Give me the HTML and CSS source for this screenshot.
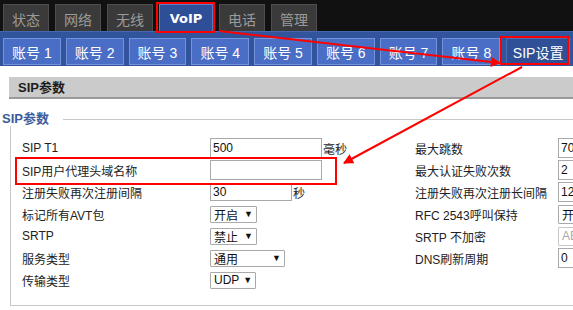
FILE: index.html
```html
<!DOCTYPE html>
<html lang="zh-CN">
<head>
<meta charset="utf-8">
<title>VoIP SIP设置</title>
<link rel="stylesheet" href="styles.css">
</head>
<body>
<div class="page">
  <div class="topbar">
    <div class="ttab">状态</div>
    <div class="ttab">网络</div>
    <div class="ttab">无线</div>
    <div class="ttab active">VoIP</div>
    <div class="ttab">电话</div>
    <div class="ttab">管理</div>
  </div>
  <div class="subnav">
    <div class="stab">账号 1</div>
    <div class="stab">账号 2</div>
    <div class="stab">账号 3</div>
    <div class="stab">账号 4</div>
    <div class="stab">账号 5</div>
    <div class="stab">账号 6</div>
    <div class="stab">账号 7</div>
    <div class="stab">账号 8</div>
    <div class="stab active">SIP设置</div>
  </div>
  <div class="content">
    <div class="sechead">SIP参数</div>
    <div class="fs-head"><span class="legend">SIP参数</span><span class="fs-line"></span></div>
    <div class="fs-body">
      <div class="grid">
        <div class="lbl">SIP T1</div>
        <div class="fld"><span class="inp w112">500</span><span class="unit">毫秒</span></div>
        <div class="lbl">最大跳数</div>
        <div class="fld"><span class="inp wide">70</span></div>

        <div class="lbl">SIP用户代理头域名称</div>
        <div class="fld"><span class="inp w112"></span></div>
        <div class="lbl">最大认证失败次数</div>
        <div class="fld"><span class="inp wide">2</span></div>

        <div class="lbl">注册失败再次注册间隔</div>
        <div class="fld"><span class="inp w82 short">30</span><span class="unit">秒</span></div>
        <div class="lbl">注册失败再次注册长间隔</div>
        <div class="fld"><span class="inp wide">1200</span></div>

        <div class="lbl">标记所有AVT包</div>
        <div class="fld"><span class="sel w47">开启<span class="arr">▼</span></span></div>
        <div class="lbl">RFC 2543呼叫保持</div>
        <div class="fld"><span class="sel wide">开启<span class="arr">▼</span></span></div>

        <div class="lbl">SRTP</div>
        <div class="fld"><span class="sel w47">禁止<span class="arr">▼</span></span></div>
        <div class="lbl">SRTP 不加密</div>
        <div class="fld"><span class="sel wide disabled">AES_CM_128_HMAC_SHA1_80<span class="arr">▼</span></span></div>

        <div class="lbl">服务类型</div>
        <div class="fld"><span class="sel w75">通用<span class="arr">▼</span></span></div>
        <div class="lbl">DNS刷新周期</div>
        <div class="fld"><span class="inp wide">0</span></div>

        <div class="lbl">传输类型</div>
        <div class="fld"><span class="sel w46">UDP<span class="arr">▼</span></span></div>
        <div class="lbl"></div>
        <div class="fld"></div>
      </div>
    </div>
  </div>
  <svg class="annot" width="573" height="310" viewBox="0 0 573 310" xmlns="http://www.w3.org/2000/svg">
    <defs>
      <marker id="ah" viewBox="0 0 10 10" refX="9" refY="5" markerWidth="6" markerHeight="5" orient="auto" markerUnits="strokeWidth">
        <path d="M0,0 L10,5 L0,10 z" fill="#f00"/>
      </marker>
    </defs>
    <rect x="157" y="3" width="57" height="29" fill="none" stroke="#f00" stroke-width="2"/>
    <rect x="501" y="37" width="67" height="27" fill="none" stroke="#f00" stroke-width="2"/>
    <rect x="16" y="158" width="320" height="26" fill="none" stroke="#f00" stroke-width="2"/>
    <line x1="219" y1="31" x2="500" y2="63" stroke="#f00" stroke-width="2" marker-end="url(#ah)"/>
    <line x1="522" y1="67" x2="344" y2="163" stroke="#f00" stroke-width="2" marker-end="url(#ah)"/>
  </svg>
</div>
</body>
</html>
```
FILE: styles.css
```css
html, body {
  margin: 0;
  padding: 0;
  background: #fff;
  overflow: hidden;
}
body {
  font-family: "Liberation Sans", "Noto Sans CJK SC", sans-serif;
  font-size: 12px;
  color: #222;
}
.page {
  position: relative;
  width: 573px;
  height: 310px;
  overflow: hidden;
}
.topbar {
  height: 31px;
  background: #111;
  display: flex;
  align-items: flex-end;
  gap: 6px;
  padding-left: 3px;
  box-sizing: border-box;
}
.ttab {
  width: 46px;
  height: 27px;
  box-sizing: border-box;
  background: #3a3a3a;
  border: 1px solid #4e4e4e;
  border-bottom: none;
  color: #9a9a9a;
  font-size: 14px;
  display: flex;
  align-items: center;
  justify-content: center;
  padding-top: 1px;
}
.ttab.active {
  width: 54px;
  background: #2e4f98;
  border-color: #5d7cc0;
  color: #fff;
  font-weight: bold;
  font-family: "DejaVu Sans", "Noto Sans CJK SC", sans-serif;
  font-size: 13px;
}
.subnav {
  height: 35px;
  box-sizing: border-box;
  background: #31549d;
  border-top: 1px solid #4467b0;
  display: flex;
  gap: 5px;
  padding: 6px 3px 0 3px;
}
.stab {
  width: 58px;
  height: 27px;
  box-sizing: border-box;
  background: #4a6ec5;
  border: 1px solid #7393da;
  color: #fff;
  font-size: 14px;
  display: flex;
  align-items: center;
  justify-content: center;
}
.stab.active {
  width: 64px;
  background: #2f5097;
  border-color: #4d6db3;
  margin-left: 1px;
}
.content {
  padding-top: 11px;
  width: 700px;
}
.sechead {
  margin-left: 9px;
  height: 20px;
  background: #cbcbcb;
  border-bottom: 2px solid #9a9a9a;
  font-weight: bold;
  font-size: 13px;
  color: #1c1c1c;
  padding-left: 9px;
  line-height: 21px;
}
.fs-head {
  margin-top: 13px;
  height: 14px;
  display: flex;
  align-items: center;
  padding-left: 2px;
}
.legend {
  color: #3a5b9e;
  font-weight: bold;
  font-size: 13px;
  line-height: 14px;
}
.fs-line {
  flex: 1;
  border-top: 1px solid #c8c8c8;
  margin-left: 14px;
}
.fs-body {
  margin-left: 10px;
  border-left: 1px solid #c8c8c8;
  border-bottom: 1px solid #c8c8c8;
  padding: 11px 0 8px 11px;
  height: 160px;
}
.grid {
  display: grid;
  grid-template-columns: 188px 205px 143px 1fr;
  grid-auto-rows: 22px;
}
.lbl {
  display: flex;
  align-items: center;
  white-space: nowrap;
  font-size: 12px;
  color: #222;
}
.fld {
  display: flex;
  align-items: center;
}
.inp {
  box-sizing: border-box;
  height: 20px;
  border: 1px solid #a9a9a9;
  background: #fff;
  padding: 0 2px;
  display: flex;
  align-items: center;
  font-size: 12px;
  color: #111;
}
.w112 { width: 112px; }
.w82 { width: 82px; }
.short { height: 18px; }
.wide { width: 120px; }
.unit {
  margin-left: 1px;
  font-size: 12px;
}
.sel {
  box-sizing: border-box;
  height: 17px;
  border: 1px solid #a9a9a9;
  border-radius: 1px;
  background: #fff;
  padding: 0 3px 0 3px;
  display: flex;
  align-items: center;
  justify-content: space-between;
  font-size: 12px;
  color: #111;
  white-space: nowrap;
  overflow: hidden;
}
.sel .arr {
  font-size: 9px;
  margin-left: 4px;
  color: #111;
}
.w47 { width: 47px; }
.w46 { width: 46px; }
.w75 { width: 75px; }
.sel.wide { height: 19px; }
.sel.disabled {
  color: #aaa;
  border-color: #c8c8c8;
}
.annot {
  position: absolute;
  left: 0;
  top: 0;
  pointer-events: none;
}
```
